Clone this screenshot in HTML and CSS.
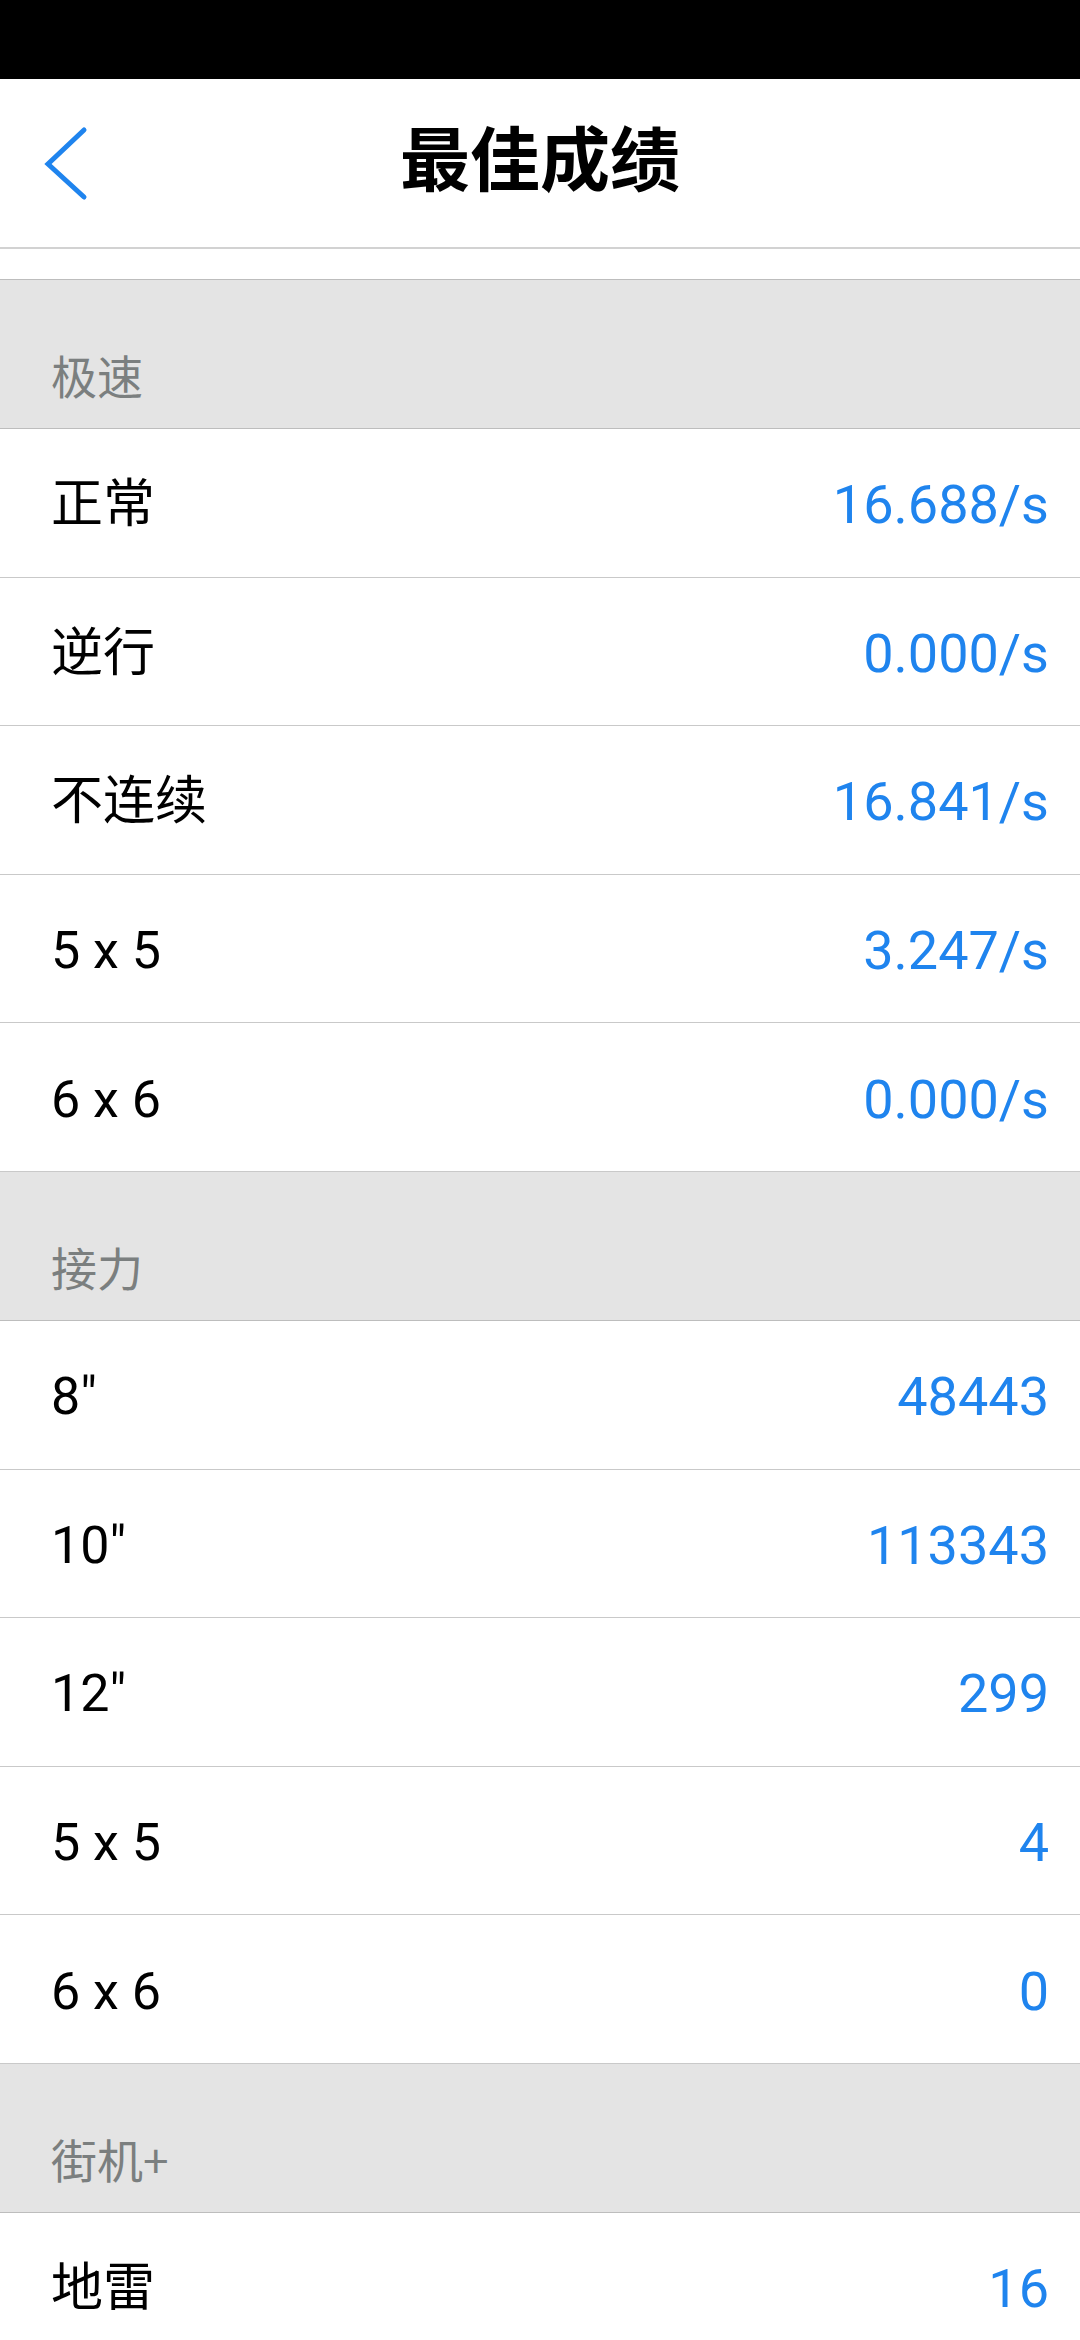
FILE: index.html
```html
<!DOCTYPE html>
<html lang="zh-CN">
<head>
<meta charset="utf-8">
<title>最佳成绩</title>
<link rel="stylesheet" href="styles.css">
</head>
<body>
<div class="status"></div>
<header class="topbar">
  <svg class="back" width="120" height="168" viewBox="0 0 120 168">
    <polyline points="84,51 48,85 84,118" fill="none" stroke="#1f84ee" stroke-width="5" stroke-linecap="round" stroke-linejoin="miter"/>
  </svg>
  <h1 class="title">最佳成绩</h1>
</header>
<div class="spacer"></div>

<div class="sec-head"><span>极速</span></div>
<div class="row"><span class="label">正常</span><span class="value">16.688/s</span></div>
<div class="row"><span class="label">逆行</span><span class="value">0.000/s</span></div>
<div class="row"><span class="label">不连续</span><span class="value">16.841/s</span></div>
<div class="row"><span class="label">5 x 5</span><span class="value">3.247/s</span></div>
<div class="row"><span class="label">6 x 6</span><span class="value">0.000/s</span></div>

<div class="sec-head"><span>接力</span></div>
<div class="row"><span class="label">8"</span><span class="value">48443</span></div>
<div class="row"><span class="label">10"</span><span class="value">113343</span></div>
<div class="row"><span class="label">12"</span><span class="value">299</span></div>
<div class="row"><span class="label">5 x 5</span><span class="value">4</span></div>
<div class="row"><span class="label">6 x 6</span><span class="value">0</span></div>

<div class="sec-head"><span>街机+</span></div>
<div class="row"><span class="label">地雷</span><span class="value">16</span></div>
</body>
</html>
```
FILE: styles.css
```css
* { box-sizing: border-box; }
html, body {
  margin: 0;
  padding: 0;
  background: #ffffff;
}
body {
  width: 1080px;
  height: 2340px;
  overflow: hidden;
  font-family: Roboto, "Noto Sans CJK SC", sans-serif;
}
.status {
  height: 79px;
  background: #000000;
}
.topbar {
  position: relative;
  height: 170px;
  border-bottom: 2px solid #d2d2d2;
  display: flex;
  align-items: center;
  justify-content: center;
}
.back {
  position: absolute;
  left: 0;
  top: 0;
}
.title {
  margin: 0;
  font-family: "Noto Sans CJK SC", sans-serif;
  font-weight: 700;
  font-size: 70px;
  line-height: 1;
  color: #000000;
  padding-bottom: 14px;
}
.spacer {
  height: 31px;
  border-bottom: 1px solid #bdbdbd;
}
.sec-head {
  height: 149px;
  background: #e4e4e4;
  border-bottom: 1px solid #bdbdbd;
  display: flex;
  align-items: flex-end;
  padding: 0 0 31px 51px;
  font-family: "Noto Sans CJK SC", sans-serif;
  font-size: 46px;
  line-height: 1;
  color: #7b7f7f;
}
.row {
  height: 148.6px;
  border-bottom: 1px solid #c9c9c9;
  display: flex;
  align-items: center;
  justify-content: space-between;
  padding: 5px 31px 0 51px;
}
.label {
  font-family: Roboto, "Noto Sans CJK SC", sans-serif;
  font-size: 52px;
  color: #000000;
  line-height: 1;
}
.value {
  font-family: Roboto, "Noto Sans CJK SC", sans-serif;
  font-size: 54px;
  color: #1f84ee;
  line-height: 1;
}
```
